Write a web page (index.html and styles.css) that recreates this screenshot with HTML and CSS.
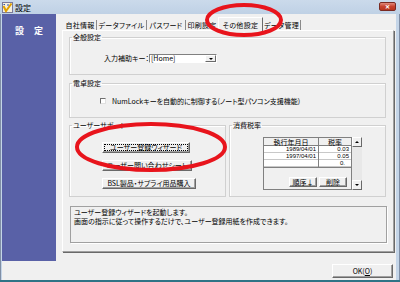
FILE: index.html
```html
<!doctype html>
<html lang="ja">
<head>
    <meta charset="UTF-8">
    <title>設定</title>
    <link rel="stylesheet" href="styles.css">
</head>
<body>
<div class="window">
    <div class="titlebar">
        <svg class="app-icon" width="11" height="11" viewBox="0 0 11 11">
            <rect x="0.5" y="0.5" width="10" height="10" fill="#f4f0e0" stroke="#7a7a9a"/>
            <path d="M1.5 4 L4 9 L9.5 1.5" fill="none" stroke="#e0a000" stroke-width="2"/>
            <path d="M1.5 2.5 L3 2.5 M5 3 L7 3" stroke="#3050b0" stroke-width="1"/>
        </svg>
        <span class="title">設定</span>
        <div class="close">✕</div>
    </div>
    <div class="client">
        <div class="side">
            <div class="side-title">設 定</div>
        </div>
        <div class="main">
            <div class="tabs">
                <div class="tab t1">自社情報</div>
                <div class="tab t2">データファイル</div>
                <div class="tab t3">パスワード</div>
                <div class="tab t4">印刷設定</div>
                <div class="tab t5 active">その他設定</div>
                <div class="tab t6">データ管理</div>
            </div>
            <div class="pane">
                <fieldset class="group g-general">
                    <legend>全般設定</legend>
                    <div class="key-row">
                        <span class="key-label">入力補助キー：</span>
                        <div class="combo">
                            <span>[Home]</span>
                            <span class="combo-btn"><i class="arrow-down"></i></span>
                        </div>
                    </div>
                </fieldset>
                <fieldset class="group g-calc">
                    <legend>電卓設定</legend>
                    <div class="check-row">
                        <span class="check"></span>
                        <span>NumLockキーを自動的に制御する(ノート型パソコン支援機能)</span>
                    </div>
                </fieldset>
                <div class="group-row">
                    <fieldset class="group g-support">
                        <legend>ユーザーサポート</legend>
                        <div class="support-list">
                            <div class="btn focus w1">ユーザー登録ウィザード</div>
                            <div class="btn w2">ユーザー問い合わせシート</div>
                            <div class="btn w3">BSL製品・サプライ用品購入</div>
                        </div>
                    </fieldset>
                    <fieldset class="group g-tax">
                        <legend>消費税率</legend>
                        <div class="tax-box">
                            <div class="grid">
                                <div class="grid-row grid-head">
                                    <div class="c1">執行年月日</div>
                                    <div class="c2">税率</div>
                                </div>
                                <div class="grid-row">
                                    <div class="c1">1989/04/01</div>
                                    <div class="c2">0.03</div>
                                </div>
                                <div class="grid-row">
                                    <div class="c1">1997/04/01</div>
                                    <div class="c2">0.05</div>
                                </div>
                                <div class="grid-row">
                                    <div class="c1"></div>
                                    <div class="c2 editing">0.</div>
                                </div>
                                <div class="grid-foot">
                                    <div class="btn small">順序↓</div>
                                    <div class="btn small">削除</div>
                                </div>
                            </div>
                            <div class="vscroll">
                                <div class="sbtn"><i class="arrow-up"></i></div>
                                <div class="strack"></div>
                                <div class="sbtn"><i class="arrow-down"></i></div>
                            </div>
                        </div>
                    </fieldset>
                </div>
                <div class="desc">
                    ユーザー登録ウィザードを起動します。<br>
                    画面の指示に従って操作するだけで、ユーザー登録用紙を作成できます。
                </div>
            </div>
            <div class="footer">
                <div class="btn ok">OK(<u>O</u>)</div>
            </div>
        </div>
    </div>
    <svg class="marks" width="400" height="282" viewBox="0 0 400 282">
        <ellipse cx="244" cy="20" rx="37" ry="15" fill="none" stroke="#e8141c" stroke-width="4"/>
        <ellipse cx="151" cy="147" rx="74" ry="23" fill="none" stroke="#e8141c" stroke-width="4"/>
    </svg>
</div>
</body>
</html>
```

FILE: styles.css
```css
* {
    margin: 0;
    padding: 0;
    box-sizing: border-box;
}

html,
body {
    width: 400px;
    height: 282px;
    overflow: hidden;
}

body {
    font: 7px/8px "Noto Sans CJK JP", sans-serif;
    font-feature-settings: "palt";
    color: #000;
    background: #fff;
}

.window {
    position: relative;
    width: 400px;
    height: 282px;
    background: #c4d5e8;
    border-bottom: 2px solid #2f7386;
    box-shadow: inset 1px 0 #7f8ea5, inset -1px 0 #7f8ea5;
    display: flex;
    flex-direction: column;
}

/* title bar */
.titlebar {
    height: 14px;
    display: flex;
    align-items: flex-start;
    padding: 2px 4px 0 2px;
    background: linear-gradient(#cbdaeb, #bfd1e5);
}

.app-icon {
    flex: none;
}

.title {
    margin-left: 2px;
    font-size: 8px;
    line-height: 11px;
}

.close {
    margin-left: auto;
    width: 17px;
    height: 9px;
    border: 1px solid #7a2a22;
    border-radius: 2px;
    background: linear-gradient(#e08a7c, #c8442f 50%, #b83620);
    color: #fff;
    font-size: 6px;
    line-height: 7px;
    text-align: center;
    font-weight: bold;
}

/* client area */
.client {
    flex: 1;
    margin: 0 4px 0 2px;
    background: #f0f0f0;
    display: flex;
}

.side {
    flex: none;
    width: 54px;
    height: 247px;
    background: #5961a7;
}

.side-title {
    padding-top: 12px;
    color: #fff;
    font-size: 9px;
    line-height: 10px;
    font-weight: bold;
    text-align: center;
    letter-spacing: 4px;
    text-indent: 4px;
}

.main {
    flex: 1;
    display: flex;
    flex-direction: column;
}

/* tabs */
.tabs {
    height: 16px;
    display: flex;
    align-items: flex-end;
    padding-left: 8px;
}

.tab {
    height: 10px;
    padding-top: 1px;
    border-right: 1px solid #8a8a8a;
    white-space: nowrap;
    text-align: center;
    letter-spacing: 0.3px;
}

.t1 { width: 33px; }
.t2 { width: 50px; }
.t3 { width: 39px; }
.t4 { width: 33px; }
.t5 { width: 45px; }
.t6 { width: 38px; }

.tab.active {
    position: relative;
    height: 14px;
    margin: 0 0 -1px -1px;
    padding-top: 3px;
    background: #f0f0f0;
    border: 1px solid #fff;
    border-right-color: #6a6a6a;
    border-bottom: none;
}

.pane {
    height: 222px;
    margin: 0 2px 0 6px;
    padding: 0 7px 0 6px;
    border: 1px solid;
    border-color: #fff #a0a0a0 #a0a0a0 #fff;
    box-shadow: 1px 1px #696969;
}

/* group boxes */
.group {
    border: 1px solid #d0d0d0;
    box-shadow: inset 1px 1px #fff;
    min-inline-size: 0;
}

.group > legend {
    margin-left: 2px;
    padding: 0 1px;
    line-height: 8px;
}

.g-general {
    margin-top: 2px;
    height: 42px;
}

.key-row {
    display: flex;
    margin-top: 13px;
    padding-left: 32px;
}

.key-label {
    width: 47px;
    text-align: right;
    line-height: 9px;
}

.combo {
    width: 68px;
    height: 9px;
    display: flex;
    justify-content: space-between;
    background: #fff;
    border: 1px solid;
    border-color: #808080 #fff #fff #808080;
    line-height: 7px;
    padding-left: 1px;
}

.combo-btn {
    width: 11px;
    height: 7px;
    background: #f0f0f0;
    border: 1px solid;
    border-color: #fff #696969 #696969 #fff;
    display: flex;
    align-items: center;
    justify-content: center;
}

.arrow-down,
.arrow-up {
    display: block;
    width: 0;
    height: 0;
    border-left: 2px solid transparent;
    border-right: 2px solid transparent;
}

.arrow-down {
    border-top: 2px solid #000;
}

.arrow-up {
    border-bottom: 2px solid #000;
}

.g-calc {
    margin-top: 4px;
    height: 39px;
}

.check-row {
    display: flex;
    align-items: center;
    margin-top: 10px;
    padding-left: 30px;
}

.check {
    width: 6px;
    height: 6px;
    margin-right: 6px;
    background: #fff;
    border: 1px solid;
    border-color: #707070 #e0e0e0 #e0e0e0 #707070;
}

.group-row {
    display: flex;
    gap: 3px;
    margin-top: 3px;
    height: 76px;
}

.g-support,
.g-tax {
    width: 157px;
    height: 76px;
}

.support-list {
    display: flex;
    flex-direction: column;
    gap: 7px;
    margin-top: 13px;
    padding-left: 32px;
}

.btn {
    height: 11px;
    background: #f0f0f0;
    border: 1px solid;
    border-color: #fff #696969 #696969 #fff;
    box-shadow: inset -1px -1px #a0a0a0;
    line-height: 9px;
    text-align: center;
    white-space: nowrap;
}

.btn.focus {
    outline: 1px dotted #000;
    outline-offset: -3px;
}

.w1 {
    width: 88px;
}

.w2 {
    width: 90px;
}

.w3 {
    width: 94px;
}

/* tax grid */
.tax-box {
    display: flex;
    margin-top: 8px;
    margin-left: 33px;
    width: 99px;
    height: 53px;
}

.grid {
    width: 89px;
    display: flex;
    flex-direction: column;
    border: 1px solid #808080;
}

.grid-row {
    display: flex;
    height: 7px;
    background: #fff;
    box-shadow: inset 0 -1px #c8c8c8;
    font: 6px/7px "Liberation Sans", sans-serif;
}

.grid-row > .c1 {
    width: 55px;
    border-right: 1px solid #808080;
    text-align: right;
    padding-right: 2px;
}

.grid-row > .c2 {
    flex: 1;
    text-align: right;
    padding-right: 2px;
}

.grid-row > .c2.editing {
    padding-right: 6px;
}

.grid-head {
    height: 8px;
    background: #f0f0f0;
    box-shadow: inset 0 -1px #808080;
    font: 7px/8px "Noto Sans CJK JP", sans-serif;
}

.grid-head > .c1,
.grid-head > .c2 {
    text-align: center;
    padding: 0;
}

.grid-foot {
    flex: 1;
    display: flex;
    align-items: flex-end;
    justify-content: flex-end;
    gap: 2px;
    padding: 0 4px 2px 0;
    border-top: 1px solid #808080;
    background: #f0f0f0;
}

.btn.small {
    height: 10px;
    line-height: 8px;
    width: 28px;
}

.vscroll {
    width: 10px;
    display: flex;
    flex-direction: column;
    background: #e8e8e8;
}

.sbtn {
    height: 10px;
    background: #f0f0f0;
    border: 1px solid;
    border-color: #fff #696969 #696969 #fff;
    display: flex;
    align-items: center;
    justify-content: center;
}

.strack {
    flex: 1;
}

/* description */
.desc {
    margin: 9px -1px 0 1px;
    height: 37px;
    padding: 1px 3px;
    border: 1px solid #a0a0a0;
    box-shadow: 1px 1px #fff;
    line-height: 9px;
}

/* footer */
.footer {
    flex: 1;
    display: flex;
    justify-content: flex-end;
    padding: 12px 3px 0 0;
}

.btn.ok {
    width: 61px;
    height: 14px;
    line-height: 12px;
}

/* annotation marks */
.marks {
    position: absolute;
    top: 0;
    left: 0;
    pointer-events: none;
}
```
